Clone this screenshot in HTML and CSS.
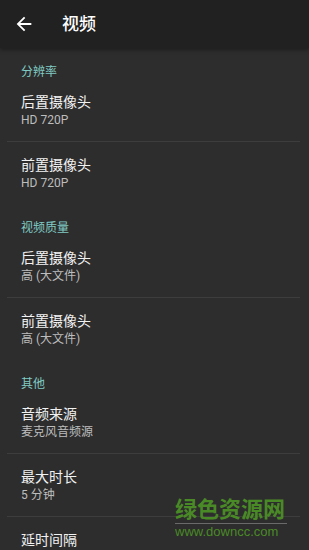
FILE: index.html
```html
<!DOCTYPE html>
<html lang="zh">
<head>
<meta charset="utf-8">
<link rel="stylesheet" href="styles.css">
</head>
<body>
<div class="app">
  <header class="toolbar">
    <svg class="back" viewBox="0 0 24 24" width="22" height="22"><path d="M20 11H7.83l5.59-5.59L12 4l-8 8 8 8 1.41-1.41L7.83 13H20v-2z" fill="#fff"/></svg>
    <h1 class="title">视频</h1>
  </header>
  <main class="list">
    <div class="section">分辨率</div>
    <div class="item"><div class="t">后置摄像头</div><div class="s">HD 720P</div></div>
    <div class="divider"></div>
    <div class="item"><div class="t">前置摄像头</div><div class="s">HD 720P</div></div>
    <div class="section">视频质量</div>
    <div class="item"><div class="t">后置摄像头</div><div class="s">高 (大文件)</div></div>
    <div class="divider"></div>
    <div class="item"><div class="t">前置摄像头</div><div class="s">高 (大文件)</div></div>
    <div class="section">其他</div>
    <div class="item"><div class="t">音频来源</div><div class="s">麦克风音频源</div></div>
    <div class="divider"></div>
    <div class="item"><div class="t">最大时长</div><div class="s">5 分钟</div></div>
    <div class="divider"></div>
    <div class="item"><div class="t">延时间隔</div></div>
  </main>
  <div class="watermark">
    <div class="wm-cn">绿色资源网</div>
    <div class="wm-url">www.downcc.com</div>
  </div>
</div>
</body>
</html>
```
FILE: styles.css
```css
html, body {
  margin: 0;
  padding: 0;
  background: #2d2d2d;
}
.app {
  position: relative;
  width: 309px;
  height: 550px;
  overflow: hidden;
  font-family: Roboto, "Noto Sans CJK SC", sans-serif;
  background: #2d2d2d;
}
.toolbar {
  height: 48px;
  background: #212121;
  display: flex;
  align-items: center;
  box-shadow: 0 2px 4px rgba(0,0,0,0.35);
  position: relative;
  z-index: 1;
}
.back {
  margin-left: 13px;
  display: block;
}
.title {
  margin: 0 0 0 27px;
  font-size: 17px;
  font-weight: 500;
  color: #fff;
  line-height: 20px;
}
.list {
  display: flex;
  flex-direction: column;
}
.section {
  height: 31px;
  box-sizing: border-box;
  padding: 16px 0 0 21px;
  font-size: 12px;
  line-height: 16px;
  color: #80cbc4;
}
.item {
  height: 62px;
  box-sizing: border-box;
  padding: 14px 0 0 21px;
}
.t {
  font-size: 14px;
  line-height: 18px;
  color: #f2f2f2;
}
.s {
  font-size: 12px;
  line-height: 18px;
  color: #bdbdbd;
}
.divider {
  height: 1px;
  margin: 0 9px 0 7px;
  background: #3d3d3d;
}
.watermark {
  position: absolute;
  left: 175px;
  top: 498px;
  width: 112px;
  display: flex;
  flex-direction: column;
  align-items: stretch;
}
.wm-cn {
  font-size: 22px;
  line-height: 24px;
  font-weight: 700;
  color: #4a8a26;
  border-bottom: 1px solid #6a6a6a;
  padding-bottom: 1px;
  white-space: nowrap;
}
.wm-url {
  font-family: "Liberation Sans", Arial, sans-serif;
  font-size: 13px;
  line-height: 15px;
  color: #4a8a26;
  white-space: nowrap;
}
```
